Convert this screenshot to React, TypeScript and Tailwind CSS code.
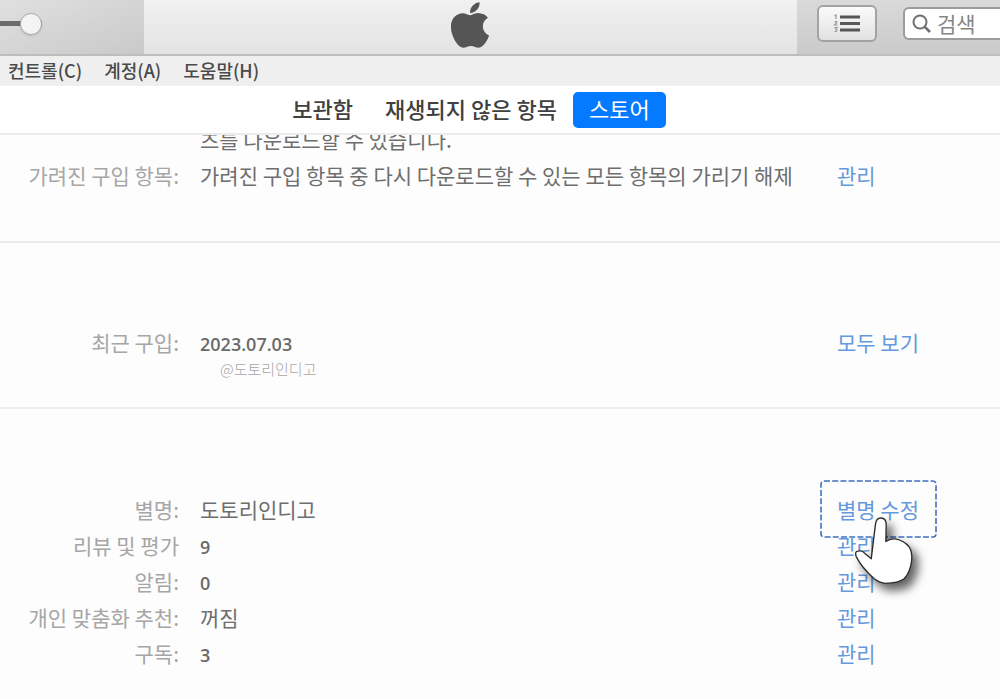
/*
 * Media player window, account settings page
 * Toolbar, menu bar, tabs, then the account rows
 */
import { FaApple } from "react-icons/fa";

const menuItems = ["컨트롤(C)", "계정(A)", "도움말(H)"];

const tabs = [
  { label: "보관함", active: false },
  { label: "재생되지 않은 항목", active: false },
  { label: "스토어", active: true },
];

type RowData = {
  label: string;
  value: string;
  action?: string;
  latin?: boolean;
  highlight?: boolean;
};

const downloadRows: RowData[] = [
  { label: "", value: "츠를 다운로드할 수 있습니다." },
  {
    label: "가려진 구입 항목:",
    value: "가려진 구입 항목 중 다시 다운로드할 수 있는 모든 항목의 가리기 해제",
    action: "관리",
  },
];

const settingRows: RowData[] = [
  { label: "별명:", value: "도토리인디고", action: "별명 수정", highlight: true },
  { label: "리뷰 및 평가", value: "9", action: "관리", latin: true },
  { label: "알림:", value: "0", action: "관리", latin: true },
  { label: "개인 맞춤화 추천:", value: "꺼짐", action: "관리" },
  { label: "구독:", value: "3", action: "관리", latin: true },
];

function Toolbar() {
  return (
    <header className="flex h-14 border-b-2 border-[#bdbdbd]">
      <div className="flex w-36 items-start bg-linear-to-br from-[#e0e0e0] to-[#c9c9c9] pt-3">
        <input
          type="range"
          aria-label="음량"
          defaultValue={100}
          className="h-[22px] w-[42px] appearance-none bg-transparent [&::-webkit-slider-runnable-track]:h-[5px] [&::-webkit-slider-runnable-track]:bg-[#6b6b6b] [&::-webkit-slider-thumb]:-mt-2 [&::-webkit-slider-thumb]:size-[22px] [&::-webkit-slider-thumb]:appearance-none [&::-webkit-slider-thumb]:rounded-full [&::-webkit-slider-thumb]:border [&::-webkit-slider-thumb]:border-[#adadad] [&::-webkit-slider-thumb]:bg-[#f4f4f4] [&::-webkit-slider-thumb]:shadow"
        />
      </div>
      <div className="flex flex-1 items-center justify-center bg-linear-to-b from-[#f1f1f1] to-[#e3e3e3] pr-[2px] pb-1">
        <FaApple size={52} className="text-[#555555]" />
      </div>
      <div className="flex w-[203px] items-start bg-linear-to-b from-[#dadada] to-[#cacaca] pt-[5px] pl-5">
        <button
          aria-label="목록"
          className="flex h-[37px] w-[60px] shrink-0 items-center justify-center rounded-md border-2 border-[#a3a3a3] bg-linear-to-b from-[#fafafa] to-[#e2e2e2]"
        >
          <svg width="28" height="20" viewBox="0 0 28 20" fill="none">
            <path d="M7 3h20M7 9.500h20M7 16h20" stroke="#565656" strokeWidth="2.800" />
            <path
              d="M1.500 2l1.500-1v4M1.500 8q3-1.500 2 .8L1.500 11h3M1.500 13.500h2.500l-1.300 1.500q2.500 1 0 2.500H1.500"
              stroke="#999999"
              strokeWidth="1.200"
            />
          </svg>
        </button>
        <label className="mt-[2px] ml-[26px] flex h-[33px] min-w-0 flex-1 items-center rounded-l-md border-2 border-r-0 border-[#9c9c9c] bg-white pl-[7px]">
          <svg width="20" height="20" viewBox="0 0 20 20" fill="none" className="shrink-0">
            <circle cx="8" cy="8" r="6.500" stroke="#6f6f6f" strokeWidth="2" />
            <path d="M12.800 12.800L18 18" stroke="#6f6f6f" strokeWidth="2.600" />
          </svg>
          <input
            type="search"
            aria-label="검색"
            placeholder="검색"
            className="ml-[5px] w-full min-w-0 bg-transparent text-[21px] outline-none placeholder:text-[#858585]"
          />
        </label>
      </div>
    </header>
  );
}

function PointerHand() {
  return (
    <svg
      className="pointer-events-none absolute top-5 left-[13px] z-10 overflow-visible drop-shadow-[6px_7px_5px_rgba(0,0,0,0.6)]"
      width="87"
      height="93"
      viewBox="150 160 260 280"
    >
      <path
        d="M213 298L226 192Q229 174 243 175Q257 176 258 192L257 246Q270 236 286 238Q312 243 327 262Q336 274 335 300Q332 336 312 358Q296 371 256 372Q240 371 222 358Q185 325 168 292Q162 276 173 275Q185 271 193 281Z"
        fill="#ffffff"
        stroke="#2b2b2b"
        strokeWidth="4"
        strokeLinejoin="round"
      />
    </svg>
  );
}

function Row({ label, value, action, latin, highlight }: RowData) {
  return (
    <div className="flex h-9 items-start text-[21px] leading-8 whitespace-nowrap">
      <span className="w-[179px] shrink-0 text-right text-[#a6a6a6]">{label}</span>
      <span
        className={
          latin
            ? "ml-[21px] flex-1 font-['Open_Sans',sans-serif] text-lg leading-9 font-semibold text-[#6a6a6a]"
            : "ml-[21px] flex-1 text-[#6e6e6e]"
        }
      >
        {value}
      </span>
      <span className="w-[163px] shrink-0">
        {action && (
          <a href="#" className="relative inline-block text-[#6598dc]">
            {action}
            {highlight && (
              <>
                <svg className="pointer-events-none absolute -top-[13px] -left-[17px]" width="118" height="59" fill="none">
                  <rect
                    x="1"
                    y="1"
                    width="115"
                    height="56"
                    rx="3"
                    stroke="#3f6fbf"
                    strokeWidth="1.600"
                    strokeDasharray="6 2.200"
                  />
                </svg>
                {/* fingertip rests just under the link text */}
                <PointerHand />
              </>
            )}
          </a>
        )}
      </span>
    </div>
  );
}

export default function App() {
  return (
    <div className="min-h-screen overflow-hidden bg-[#fdfdfd] font-['Noto_Sans_CJK_KR',sans-serif]">
      <Toolbar />

      {/* Menu bar */}
      <nav className="flex h-[30px] items-center gap-[22px] bg-[#efefef] pb-[2px] pl-2 text-lg leading-7 font-medium text-[#4a4a4a]">
        {menuItems.map((item) => (
          <button key={item}>{item}</button>
        ))}
      </nav>

      {/* Tabs */}
      <nav className="flex h-[49px] items-center justify-center border-b-2 border-[#ececec] bg-white pr-[58px] text-[22px] font-medium">
        {tabs.map((tab) => (
          <button
            key={tab.label}
            className={
              tab.active
                ? "h-9 rounded-[5px] bg-[#037aff] px-4 pb-[3px] leading-8 font-normal text-white"
                : "h-9 px-4 pb-[3px] leading-8 text-[#404040]"
            }
          >
            {tab.label}
          </button>
        ))}
      </nav>

      <main className="overflow-hidden">
        {/* scrolled a little, so the first line is cut by the tab bar */}
        <section className="-mt-3 border-b-2 border-[#ececec] pb-[46px]">
          {downloadRows.map((row) => (
            <Row key={row.value} {...row} />
          ))}
        </section>

        <section className="relative border-b-2 border-[#f0f0f0] pt-[83px] pb-[45px]">
          <Row label="최근 구입:" value="2023.07.03" action="모두 보기" latin />
          <span className="absolute bottom-7 left-[220px] text-[15px] leading-5 font-light text-[#a8a8a8]">
            @도토리인디고
          </span>
        </section>

        <section className="pt-[84px] pb-6">
          {settingRows.map((row) => (
            <Row key={row.label} {...row} />
          ))}
        </section>
      </main>
    </div>
  );
}
